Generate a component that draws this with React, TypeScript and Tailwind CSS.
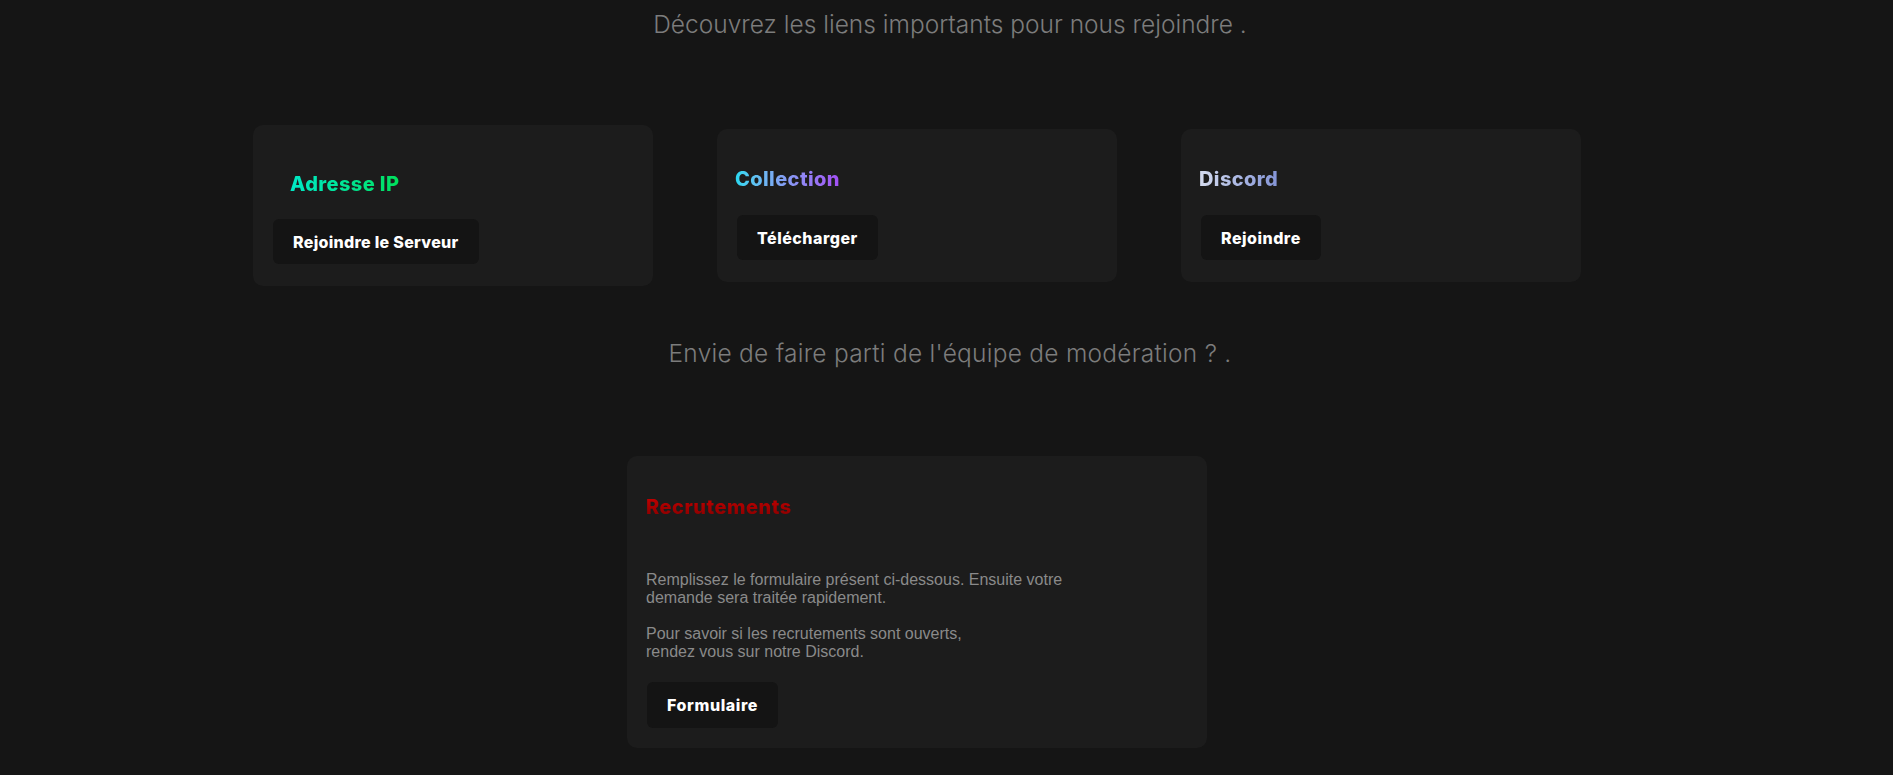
import React from 'react';

const titleFont = { fontFamily: 'Inter, "Noto Sans", sans-serif' };

type LinkCard = {
  title: string;
  titleClass: string;
  button: string;
  first?: boolean;
};

const cards: LinkCard[] = [
  {
    title: 'Adresse IP',
    titleClass: 'bg-gradient-to-r from-[#00e8c6] to-[#00e05a]',
    button: 'Rejoindre le Serveur',
    first: true,
  },
  {
    title: 'Collection',
    titleClass: 'bg-gradient-to-r from-[#22d8f0] to-[#a24cf5]',
    button: 'Télécharger',
  },
  {
    title: 'Discord',
    titleClass: 'bg-gradient-to-r from-[#d4dbee] to-[#8494d6]',
    button: 'Rejoindre',
  },
];

const Button: React.FC<{ label: string; className?: string }> = ({ label, className = '' }) => (
  <button
    className={`h-[45px] px-5 rounded-md bg-[#141414] text-white text-[16px] font-extrabold ${className}`}
    style={titleFont}
  >
    {label}
  </button>
);

const App: React.FC = () => {
  return (
    <div
      className="min-h-screen w-full bg-[#151515] flex flex-col items-center pb-10"
      style={{ fontFamily: 'Inter, "Noto Sans", sans-serif' }}
    >
      {/* Intro */}
      <h1 className="pt-[6px] pl-[7px] text-[24.5px] leading-[36px] font-light text-[#7c7c7c]">
        Découvrez les liens importants pour nous rejoindre .
      </h1>

      {/* Link cards */}
      <div className="mt-[83px] flex items-center gap-16 pr-[59px]">
        {cards.map((card) => (
          <div
            key={card.title}
            className={`w-[400px] rounded-[10px] bg-[#1c1c1c] pl-[18px] pb-[22px] flex flex-col items-start ${
              card.first ? 'pt-[44px]' : 'pt-[35px]'
            }`}
          >
            <h2
              className={`text-[20px] leading-[30px] font-extrabold tracking-[0.4px] bg-clip-text text-transparent ${card.titleClass} ${
                card.first ? 'ml-[19px]' : ''
              }`}
              style={titleFont}
            >
              {card.title}
            </h2>
            <Button
              label={card.button}
              className={card.first ? 'mt-[20px] ml-[2px] tracking-[0.3px]' : 'mt-[21px] ml-[2px] tracking-[0.5px]'}
            />
          </div>
        ))}
      </div>

      {/* Moderation */}
      <h1 className="mt-[49px] pl-[7px] text-[24.5px] leading-[36px] font-light tracking-[0.25px] text-[#7c7c7c]">
        Envie de faire parti de l'équipe de modération ? .
      </h1>

      <div className="mt-[85px] pr-[59px]">
        <div className="w-[580px] rounded-[10px] bg-[#1c1c1c] pt-[36px] pl-[19px] pb-[20px] flex flex-col items-start">
          <h2
            className="text-[20px] leading-[30px] font-extrabold tracking-[0.5px] bg-clip-text text-transparent bg-gradient-to-b from-[#d40000] to-[#7a0000]"
            style={titleFont}
          >
            Recrutements
          </h2>
          <p
            className="mt-[49px] text-[16px] leading-[18px] text-[#8a8a8a]"
            style={{ fontFamily: '"Liberation Sans", Arial, sans-serif' }}
          >
            Remplissez le formulaire présent ci-dessous. Ensuite votre
            <br />
            demande sera traitée rapidement.
            <br />
            <br />
            Pour savoir si les recrutements sont ouverts,
            <br />
            rendez vous sur notre Discord.
          </p>
          <Button label="Formulaire" className="mt-[21px] ml-[1px] h-[46px] tracking-[0.6px]" />
        </div>
      </div>
    </div>
  );
};

export default App;
